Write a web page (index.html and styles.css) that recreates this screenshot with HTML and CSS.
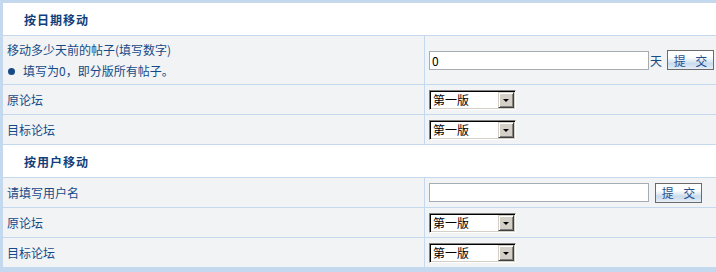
FILE: index.html
```html
<!DOCTYPE html>
<html lang="zh-CN">

<head>
    <meta charset="UTF-8">
    <meta name="viewport" content="width=device-width, initial-scale=1.0">
    <title>移动帖子</title>
    <link rel="stylesheet" href="styles.css">
</head>

<body>

    <form class="panel">

        <div class="head">按日期移动</div>

        <div class="label tall">
            <div>移动多少天前的帖子(填写数字)</div>
            <div><span class="dot"></span>填写为0，即分版所有帖子。</div>
        </div>
        <div class="field">
            <input type="text" class="txt" value="0"><span class="unit">天</span>
            <button type="button" class="btn">提 交</button>
        </div>

        <div class="label">原论坛</div>
        <div class="field">
            <span class="pick"><select class="board"><option>第一版</option></select><span class="arrow"></span></span>
        </div>

        <div class="label">目标论坛</div>
        <div class="field">
            <span class="pick"><select class="board"><option>第一版</option></select><span class="arrow"></span></span>
        </div>

        <div class="head">按用户移动</div>

        <div class="label">请填写用户名</div>
        <div class="field">
            <input type="text" class="txt" value="">
            <button type="button" class="btn gap">提 交</button>
        </div>

        <div class="label">原论坛</div>
        <div class="field">
            <span class="pick"><select class="board"><option>第一版</option></select><span class="arrow"></span></span>
        </div>

        <div class="label">目标论坛</div>
        <div class="field">
            <span class="pick"><select class="board"><option>第一版</option></select><span class="arrow"></span></span>
        </div>

    </form>

</body>

</html>
```

FILE: styles.css
```css
*,
*::after,
*::before {
    margin: 0;
    padding: 0;
    box-sizing: border-box;
}

body {
    background: #c4d9ee;
    width: 716px;
    height: 272px;
    overflow: hidden;
    font-family: "Noto Sans CJK SC", "Liberation Sans", sans-serif;
    font-size: 12px;
    color: #164a87;
}

.panel {
    display: grid;
    grid-template-columns: 421px 1fr;
    gap: 1px;
    padding: 3px 0 0 3px;
}

.head {
    grid-column: 1 / 3;
    height: 32px;
    background: #ffffff;
    display: flex;
    align-items: center;
    padding-left: 21px;
    font-weight: bold;
    letter-spacing: 1px;
    color: #0f3f7c;
}

.label {
    min-height: 29px;
    background: #f1f3f5;
    display: flex;
    flex-direction: column;
    justify-content: center;
    padding-left: 4px;
}

.tall {
    height: 48px;
    line-height: 21px;
}

.field {
    min-height: 29px;
    background: #f1f3f5;
    display: flex;
    align-items: center;
    padding-left: 4px;
}

.dot {
    display: inline-block;
    width: 7px;
    height: 7px;
    border-radius: 50%;
    background: #164a87;
    margin: 0 8px 0 1px;
    vertical-align: 1px;
}

.txt {
    width: 220px;
    height: 19px;
    border: 1px solid #a5acb2;
    background: #fff;
    padding: 0 2px;
    font-family: "Noto Sans CJK SC", "Liberation Sans", sans-serif;
    font-size: 12px;
    color: #000;
    outline: none;
}

.unit {
    margin-left: 1px;
}

.btn {
    width: 47px;
    height: 20px;
    margin-left: 5px;
    border: 1px solid #6b6b6b;
    background: linear-gradient(#ffffff 0%, #ffffff 35%, #c9dbec 70%, #e6eef6 100%);
    font-family: "Noto Sans CJK SC", "Liberation Sans", sans-serif;
    font-size: 12px;
    word-spacing: 7px;
    color: #1f4f8f;
}

.btn.gap {
    margin-left: 6px;
}

.pick {
    position: relative;
    display: inline-block;
    width: 87px;
    height: 20px;
}

.board {
    appearance: none;
    width: 87px;
    height: 20px;
    border: 1px solid;
    border-color: #808080 #ffffff #ffffff #808080;
    box-shadow: inset 1px 1px 0 #000000, inset -1px -1px 0 #d4d0c8;
    background: #ffffff;
    padding-left: 3px;
    font-family: "Noto Sans CJK SC", "Liberation Sans", sans-serif;
    font-size: 12px;
    color: #000;
    outline: none;
}

.arrow {
    position: absolute;
    top: 2px;
    right: 2px;
    width: 16px;
    height: 16px;
    background: #d4d0c8;
    border: 1px solid;
    border-color: #d4d0c8 #404040 #404040 #d4d0c8;
    box-shadow: inset 1px 1px 0 #ffffff, inset -1px -1px 0 #808080;
    pointer-events: none;
}

.arrow::after {
    content: "";
    position: absolute;
    left: 4px;
    top: 6px;
    border-left: 3px solid transparent;
    border-right: 3px solid transparent;
    border-top: 3px solid #000;
}
```
